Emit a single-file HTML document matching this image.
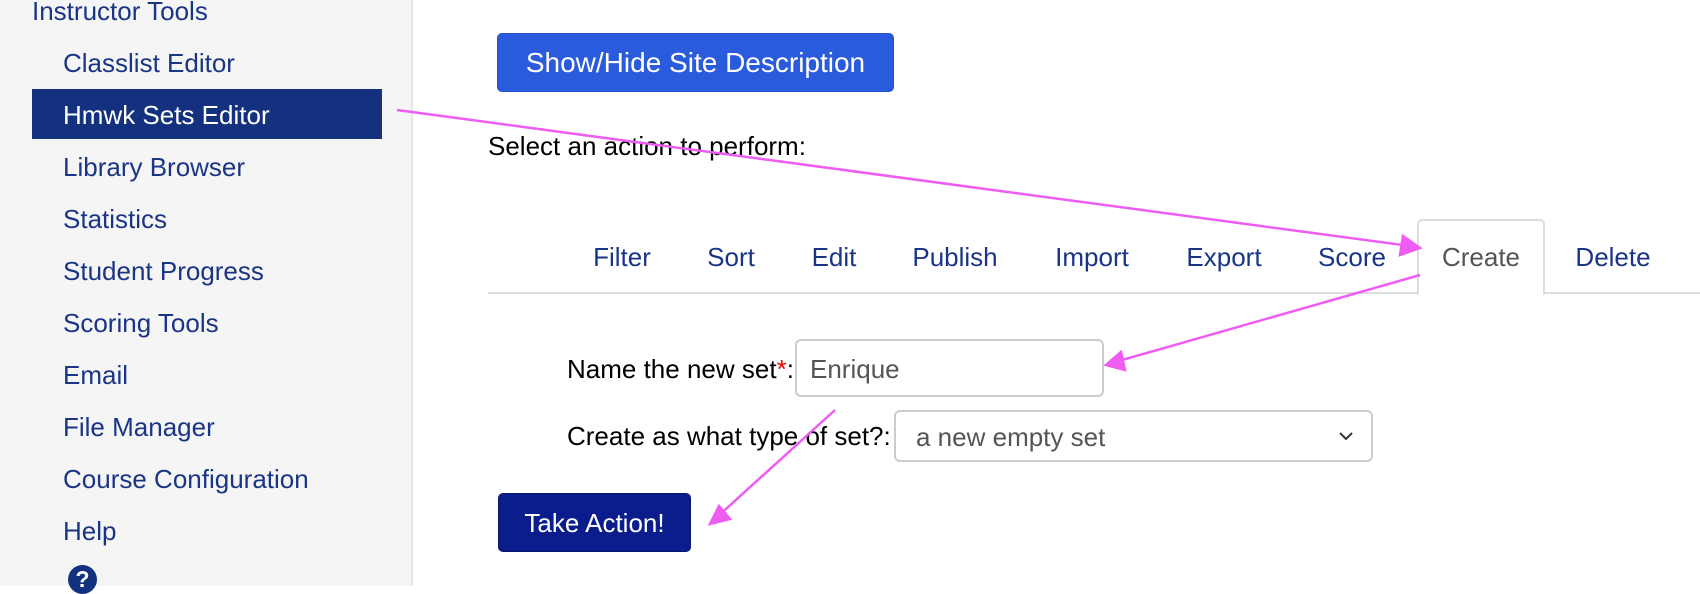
<!DOCTYPE html>
<html><head><meta charset="utf-8"><style>
*{margin:0;padding:0;box-sizing:border-box}
body{width:1700px;height:586px;overflow:hidden;background:#fff;font-family:"Liberation Sans",Arial,sans-serif;position:relative}
.side{position:absolute;left:0;top:0;width:413px;height:586px;background:#f5f5f5;border-right:2px solid #e6e6e6}
.si{position:absolute;left:63px;font-size:26px;color:#1a3585;line-height:30px;white-space:nowrap}
.hl{position:absolute;left:32px;top:89px;width:350px;height:50px;background:#13317e}
.t{position:absolute;white-space:nowrap}
.tab{position:absolute;top:242px;font-size:26px;color:#1a3585;transform:translateX(-50%);line-height:30px}
</style></head><body>
<div class="side">
<div class="si" style="left:32px;top:-4px">Instructor Tools</div>
<div class="si" style="top:48px">Classlist Editor</div>
<div class="hl"></div>
<div class="si" style="top:100px;color:#fff">Hmwk Sets Editor</div>
<div class="si" style="top:152px">Library Browser</div>
<div class="si" style="top:204px">Statistics</div>
<div class="si" style="top:256px">Student Progress</div>
<div class="si" style="top:308px">Scoring Tools</div>
<div class="si" style="top:360px">Email</div>
<div class="si" style="top:412px">File Manager</div>
<div class="si" style="top:464px">Course Configuration</div>
<div class="si" style="top:516px">Help</div>
<div style="position:absolute;left:68px;top:565px;width:29px;height:29px;border-radius:50%;background:#13317e;color:#fff;font-weight:bold;font-size:23px;text-align:center;line-height:29px">?</div>
</div>

<div style="position:absolute;left:497px;top:33px;width:397px;height:59px;background:#2a5bdc;border:1px solid #2350c4;border-radius:5px;color:#fff;font-size:28px;text-align:center;line-height:57px">Show/Hide Site Description</div>
<div class="t" style="left:488px;top:131px;font-size:26px;color:#000">Select an action to perform:</div>

<div style="position:absolute;left:488px;top:292px;width:1212px;height:2px;background:#ddd"></div>
<div style="position:absolute;left:1417px;top:219px;width:128px;height:76px;background:#fff;border:2px solid #ddd;border-bottom:none;border-radius:5px 5px 0 0"></div>
<div class="tab" style="left:622px">Filter</div>
<div class="tab" style="left:731px">Sort</div>
<div class="tab" style="left:834px">Edit</div>
<div class="tab" style="left:955px">Publish</div>
<div class="tab" style="left:1092px">Import</div>
<div class="tab" style="left:1224px">Export</div>
<div class="tab" style="left:1352px">Score</div>
<div class="tab" style="left:1481px;color:#555">Create</div>
<div class="tab" style="left:1613px">Delete</div>

<div class="t" style="left:567px;top:354px;font-size:26px;color:#000">Name the new set<span style="color:#e00">*</span>:</div>
<div style="position:absolute;left:795px;top:339px;width:309px;height:58px;border:2px solid #ccc;border-radius:6px;font-size:26px;color:#555;padding-left:13px;line-height:56px">Enrique</div>
<div class="t" style="left:567px;top:421px;font-size:26px;color:#000">Create as what type of set?:</div>
<div style="position:absolute;left:894px;top:410px;width:479px;height:52px;border:2px solid #ccc;border-radius:6px;font-size:26px;color:#555;padding-left:20px;line-height:50px">a new empty set
<svg style="position:absolute;right:18px;top:19px" width="14" height="10" viewBox="0 0 14 10"><path d="M1 2l6 6 6-6" fill="none" stroke="#333" stroke-width="2"/></svg></div>

<div style="position:absolute;left:498px;top:493px;width:193px;height:59px;background:#0b1d8c;border:1px solid #081670;border-radius:5px;color:#fff;font-size:26px;text-align:center;line-height:58px">Take Action!</div>

<svg style="position:absolute;left:0;top:0" width="1700" height="586">
<g stroke="#ee5cf2" stroke-width="2.5" fill="#ee5cf2">
<line x1="397" y1="110" x2="1410" y2="246"/>
<polygon points="1420,248 1400,255 1403,236"/>
<line x1="1420" y1="275" x2="1115" y2="362"/>
<polygon points="1106,365 1121,352 1125,370"/>
<line x1="835" y1="410" x2="716" y2="518"/>
<polygon points="710,524 719,506 730,519"/>
</g>
</svg>
</body></html>
